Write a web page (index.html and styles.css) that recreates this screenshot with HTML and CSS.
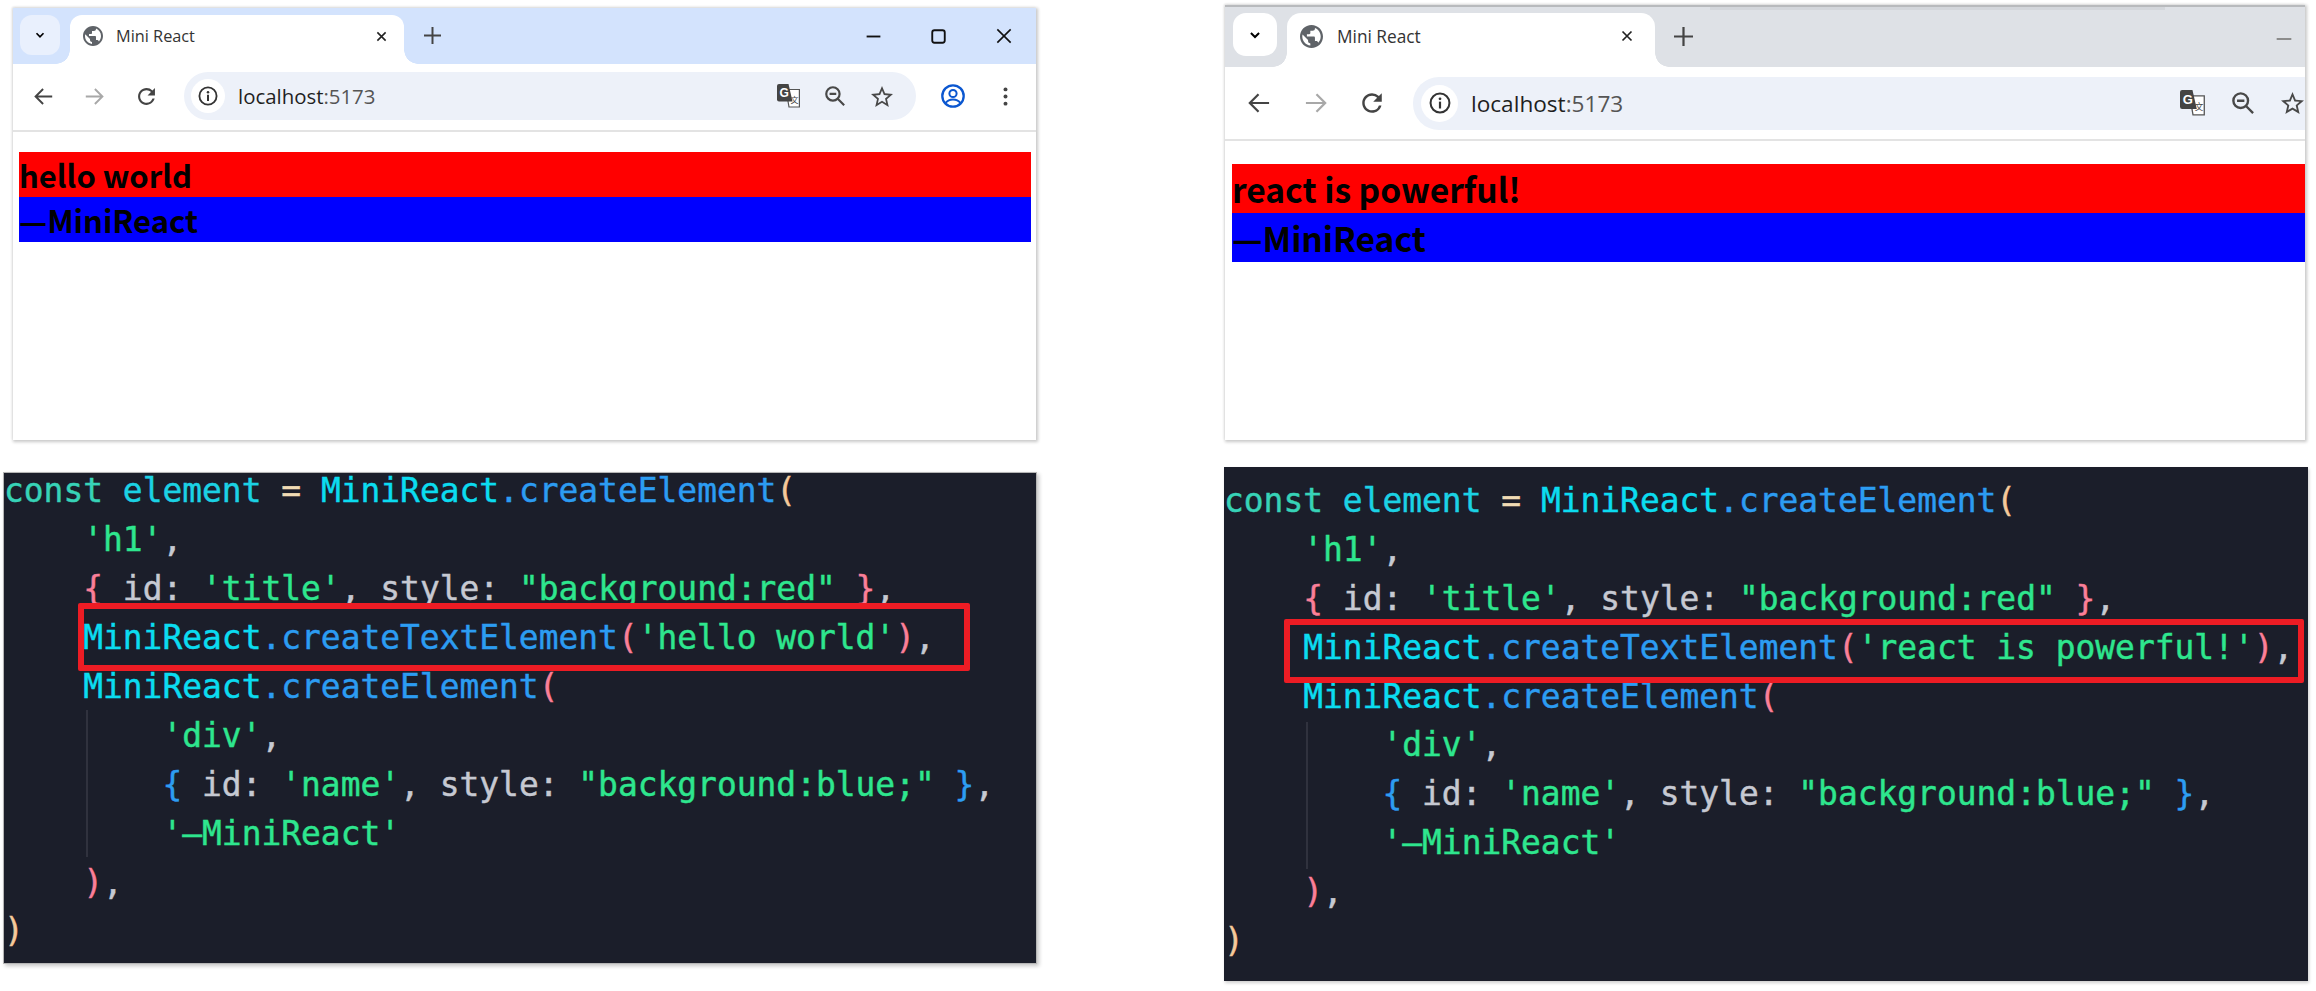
FILE: index.html
```html
<!DOCTYPE html>
<html lang="en">
<head>
<meta charset="utf-8">
<title>Mini React</title>
<link rel="stylesheet" href="styles.css">
</head>
<body>
<svg class="sprite" aria-hidden="true">
  <symbol id="i-chev" viewBox="0 0 24 24"><path d="M5 8.5l7 7 7-7" fill="none" stroke="currentColor" stroke-width="3.4"/></symbol>
  <symbol id="i-globe" viewBox="2 2 20 20"><path fill="#5f6368" d="M12 2C6.48 2 2 6.48 2 12s4.48 10 10 10 10-4.48 10-10S17.52 2 12 2zm-1 17.93c-3.95-.49-7-3.85-7-7.93 0-.62.08-1.21.21-1.79L9 15v1c0 1.1.9 2 2 2v1.93zm6.9-2.54c-.26-.81-1-1.39-1.9-1.39h-1v-3c0-.55-.45-1-1-1H8v-2h2c.55 0 1-.45 1-1V7h2c1.1 0 2-.9 2-2v-.41c2.93 1.19 5 4.06 5 7.41 0 2.08-.8 3.97-2.1 5.39z"/></symbol>
  <symbol id="i-x" viewBox="0 0 24 24"><path d="M3 3l18 18M21 3L3 21" fill="none" stroke="currentColor" stroke-width="3.4"/></symbol>
  <symbol id="i-plus" viewBox="0 0 24 24"><path d="M12 0v24M0 12h24" fill="none" stroke="currentColor" stroke-width="2.8"/></symbol>
  <symbol id="i-back" viewBox="0 0 24 24"><path d="M23 12H2M11.5 2.5L2 12l9.5 9.500" fill="none" stroke="currentColor" stroke-width="2.400"/></symbol>
  <symbol id="i-fwd" viewBox="0 0 24 24"><path d="M1 12h21M12.500 2.500L22 12l-9.500 9.500" fill="none" stroke="currentColor" stroke-width="2.400"/></symbol>
  <symbol id="i-reload" viewBox="3 3 18 18"><path fill="currentColor" d="M17.650 6.350A7.958 7.958 0 0 0 12 4c-4.420 0-7.990 3.580-7.990 8s3.570 8 7.990 8c3.730 0 6.840-2.550 7.730-6h-2.080A5.990 5.990 0 0 1 12 18c-3.310 0-6-2.690-6-6s2.690-6 6-6c1.660 0 3.140.690 4.220 1.780L13 11h7V4l-2.350 2.350z"/></symbol>
  <symbol id="i-info" viewBox="0 0 24 24"><circle cx="12" cy="12" r="10.300" fill="none" stroke="currentColor" stroke-width="2.200"/><circle cx="12" cy="7.400" r="1.500" fill="currentColor"/><path d="M12 10.500v7.500" stroke="currentColor" stroke-width="2.400"/></symbol>
  <symbol id="i-zoom" viewBox="0 0 24 24"><circle cx="9.500" cy="9.500" r="8" fill="none" stroke="currentColor" stroke-width="2.600"/><path d="M5.500 9.500h8M15.300 15.300L23 23" fill="none" stroke="currentColor" stroke-width="2.600"/></symbol>
  <symbol id="i-star" viewBox="2 2 20 19"><path fill="currentColor" d="M22 9.240l-7.190-.620L12 2 9.190 8.630 2 9.240l5.460 4.730L5.820 21 12 17.270 18.180 21l-1.630-7.030L22 9.240zM12 15.400l-3.760 2.270 1-4.280-3.320-2.880 4.380-.380L12 6.100l1.710 4.040 4.380.380-3.320 2.880 1 4.280L12 15.400z"/></symbol>
  <symbol id="i-user" viewBox="0 0 24 24"><circle cx="12" cy="12" r="10.700" fill="none" stroke="currentColor" stroke-width="2.300"/><circle cx="12" cy="9.500" r="3.600" fill="none" stroke="currentColor" stroke-width="2"/><path d="M4.500 19c2-2.600 4.500-3.600 7.500-3.600s5.500 1 7.500 3.600" fill="none" stroke="currentColor" stroke-width="2"/></symbol>
  <symbol id="i-menu" viewBox="0 0 6 24"><circle cx="3" cy="3" r="2.500" fill="currentColor"/><circle cx="3" cy="12" r="2.500" fill="currentColor"/><circle cx="3" cy="21" r="2.500" fill="currentColor"/></symbol>
  <symbol id="i-min" viewBox="0 0 24 24"><path d="M1 12h22" stroke="currentColor" stroke-width="3"/></symbol>
  <symbol id="i-max" viewBox="0 0 24 24"><rect x="2" y="2" width="20" height="20" rx="3.500" fill="none" stroke="currentColor" stroke-width="3"/></symbol>
  <symbol id="i-close" viewBox="0 0 24 24"><path d="M2 2l20 20M22 2L2 22" fill="none" stroke="currentColor" stroke-width="2.400"/></symbol>
</svg>

<main class="page">
  <section class="col col-a">
    <div class="browser browser-a">
      <div class="strip">
        <div class="tabsearch"><svg class="ic ic-chev"><use href="#i-chev"/></svg></div>
        <div class="tab">
          <svg class="ic ic-globe"><use href="#i-globe"/></svg>
          <span class="tab-title">Mini React</span>
          <svg class="ic ic-x"><use href="#i-x"/></svg>
        </div>
        <svg class="ic ic-plus"><use href="#i-plus"/></svg>
        <div class="winctl">
          <svg class="ic ic-min"><use href="#i-min"/></svg>
          <svg class="ic ic-max"><use href="#i-max"/></svg>
          <svg class="ic ic-close"><use href="#i-close"/></svg>
        </div>
      </div>
      <div class="toolbar">
        <svg class="ic ic-nav ic-back"><use href="#i-back"/></svg>
        <svg class="ic ic-nav ic-fwd"><use href="#i-fwd"/></svg>
        <svg class="ic ic-nav ic-reload"><use href="#i-reload"/></svg>
        <div class="omni">
          <span class="site"><svg class="ic ic-info"><use href="#i-info"/></svg></span>
          <span class="url">localhost<span class="port">:5173</span></span>
          <svg class="ic ic-tr" viewBox="0 0 24 24"><path fill="#fff" stroke="#555" stroke-width="1.200" d="M9 5.500h13.400v17.500H12z"/><path fill="#444" d="M2 0h9.500l4 17.500H2a2 2 0 0 1-2-2V2a2 2 0 0 1 2-2z"/><text x="2.500" y="12.500" class="tr-g">G</text><text x="13.500" y="18.500" class="tr-z">文</text></svg>
          <svg class="ic ic-zoom"><use href="#i-zoom"/></svg>
          <svg class="ic ic-star"><use href="#i-star"/></svg>
        </div>
        <svg class="ic ic-user"><use href="#i-user"/></svg>
        <svg class="ic ic-menu"><use href="#i-menu"/></svg>
      </div>
      <div class="viewport">
        <h1 class="h-red">hello world</h1>
        <div class="h-blue">—MiniReact</div>
      </div>
    </div>

    <div class="code code-a">
      <div class="lines">
        <div class="ln"><span class="k">const</span> <span class="v">element</span> <span class="o">=</span> <span class="c">MiniReact</span><span class="f">.createElement</span><span class="p1">(</span></div>
        <div class="ln">    <span class="s">'h1'</span><span class="d">,</span></div>
        <div class="ln">    <span class="p2">{</span> <span class="d">id:</span> <span class="s">'title'</span><span class="d">, style:</span> <span class="s">"background:red"</span> <span class="p2">}</span><span class="d">,</span></div>
        <div class="ln">    <span class="c">MiniReact</span><span class="f">.createTextElement</span><span class="p2">(</span><span class="s">'hello world'</span><span class="p2">)</span><span class="d">,</span></div>
        <div class="ln">    <span class="c">MiniReact</span><span class="f">.createElement</span><span class="p2">(</span></div>
        <div class="ln">        <span class="s">'div'</span><span class="d">,</span></div>
        <div class="ln">        <span class="p3">{</span> <span class="d">id:</span> <span class="s">'name'</span><span class="d">, style:</span> <span class="s">"background:blue;"</span> <span class="p3">}</span><span class="d">,</span></div>
        <div class="ln">        <span class="s">'—MiniReact'</span></div>
        <div class="ln">    <span class="p2">)</span><span class="d">,</span></div>
        <div class="ln"><span class="p1">)</span></div>
      </div>
      <div class="guide"></div>
      <div class="mark"></div>
    </div>
  </section>

  <section class="col col-b">
    <div class="browser browser-b">
      <div class="strip">
        <div class="tabsearch"><svg class="ic ic-chev"><use href="#i-chev"/></svg></div>
        <div class="tab">
          <svg class="ic ic-globe"><use href="#i-globe"/></svg>
          <span class="tab-title">Mini React</span>
          <svg class="ic ic-x"><use href="#i-x"/></svg>
        </div>
        <svg class="ic ic-plus"><use href="#i-plus"/></svg>
        <div class="winctl">
          <svg class="ic ic-min"><use href="#i-min"/></svg>
        </div>
      </div>
      <div class="toolbar">
        <svg class="ic ic-nav ic-back"><use href="#i-back"/></svg>
        <svg class="ic ic-nav ic-fwd"><use href="#i-fwd"/></svg>
        <svg class="ic ic-nav ic-reload"><use href="#i-reload"/></svg>
        <div class="omni">
          <span class="site"><svg class="ic ic-info"><use href="#i-info"/></svg></span>
          <span class="url">localhost<span class="port">:5173</span></span>
          <svg class="ic ic-tr" viewBox="0 0 24 24"><path fill="#fff" stroke="#555" stroke-width="1.200" d="M9 5.500h13.400v17.500H12z"/><path fill="#444" d="M2 0h9.500l4 17.500H2a2 2 0 0 1-2-2V2a2 2 0 0 1 2-2z"/><text x="2.500" y="12.500" class="tr-g">G</text><text x="13.500" y="18.500" class="tr-z">文</text></svg>
          <svg class="ic ic-zoom"><use href="#i-zoom"/></svg>
          <svg class="ic ic-star"><use href="#i-star"/></svg>
        </div>
      </div>
      <div class="viewport">
        <h1 class="h-red">react is powerful!</h1>
        <div class="h-blue">—MiniReact</div>
      </div>
    </div>

    <div class="code code-b">
      <div class="lines">
        <div class="ln"><span class="k">const</span> <span class="v">element</span> <span class="o">=</span> <span class="c">MiniReact</span><span class="f">.createElement</span><span class="p1">(</span></div>
        <div class="ln">    <span class="s">'h1'</span><span class="d">,</span></div>
        <div class="ln">    <span class="p2">{</span> <span class="d">id:</span> <span class="s">'title'</span><span class="d">, style:</span> <span class="s">"background:red"</span> <span class="p2">}</span><span class="d">,</span></div>
        <div class="ln">    <span class="c">MiniReact</span><span class="f">.createTextElement</span><span class="p2">(</span><span class="s">'react is powerful!'</span><span class="p2">)</span><span class="d">,</span></div>
        <div class="ln">    <span class="c">MiniReact</span><span class="f">.createElement</span><span class="p2">(</span></div>
        <div class="ln">        <span class="s">'div'</span><span class="d">,</span></div>
        <div class="ln">        <span class="p3">{</span> <span class="d">id:</span> <span class="s">'name'</span><span class="d">, style:</span> <span class="s">"background:blue;"</span> <span class="p3">}</span><span class="d">,</span></div>
        <div class="ln">        <span class="s">'—MiniReact'</span></div>
        <div class="ln">    <span class="p2">)</span><span class="d">,</span></div>
        <div class="ln"><span class="p1">)</span></div>
      </div>
      <div class="guide"></div>
      <div class="mark"></div>
    </div>
  </section>
</main>
</body>
</html>
```
FILE: styles.css
```css
* { box-sizing: border-box; }
html, body { margin: 0; padding: 0; background: #fff; }
body { width: 2316px; height: 991px; overflow: hidden; }
.sprite { position: absolute; width: 0; height: 0; }

.page { display: flex; height: 991px; }
.col { display: flex; flex-direction: column; }
.col-a { width: 1032px; margin-left: 4px; padding-top: 8px; }
.col-b { width: 1084px; margin-left: 188px; padding-top: 5px; }

.ic { display: block; flex: none; }
.tr-g { font: 700 12px "Liberation Sans", sans-serif; fill: #fff; }
.tr-z { font: 400 8px "Noto Sans CJK SC", sans-serif; fill: #444; }

/* Browser window */
.browser {
  display: flex; flex-direction: column; overflow: hidden; background: #fff;
  box-shadow: 1px 1px 3px 1px #c8c8c8, -1px -1px 2px #eee;
}
.browser-a {
  width: 1023px; height: 432px; margin-left: 9px;
  --strip: #d3e3fd; --search: #e9f0fd;
}
.browser-b {
  width: 1080px; height: 435px; margin-left: 1px; border-top: 2px solid #b8babd;
  --strip: #dee1e6; --search: #fff;
}

.strip { position: relative; display: flex; align-items: flex-start; flex: none; background: var(--strip); }
.browser-a .strip { height: 56px; padding: 7px 0 0 7px; }
.browser-b .strip { height: 60px; padding: 6px 0 0 8px; }
.browser-b .strip::before {
  content: ""; position: absolute; left: 485px; top: 0; width: 455px; height: 3px;
  background: #d3d6db;
}

.tabsearch { display: flex; align-items: center; justify-content: center; background: var(--search); flex: none; }
.browser-a .tabsearch { width: 40px; height: 40px; border-radius: 12px; }
.browser-b .tabsearch { width: 44px; height: 43px; border-radius: 13px; }
.browser-a .ic-chev { width: 12px; height: 12px; }
.browser-b .ic-chev { width: 14px; height: 14px; }

.tab {
  position: relative; display: flex; align-items: center; flex: none; background: #fff;
}
.browser-a .tab { width: 334px; height: 49px; margin-left: 10px; padding: 0 17px 7px 13px; border-radius: 12px 12px 0 0; }
.browser-b .tab { width: 368px; height: 54px; margin-left: 10px; padding: 0 22px 8px 13px; border-radius: 14px 14px 0 0; }
.tab::before, .tab::after {
  content: ""; position: absolute; bottom: 0; width: 14px; height: 14px;
}
.tab::before { left: -14px; background: radial-gradient(circle at 0 0, transparent 13.500px, #fff 14px); }
.tab::after { right: -14px; background: radial-gradient(circle at 100% 0, transparent 13.500px, #fff 14px); }

.browser-a .ic-globe { width: 20px; height: 20px; }
.browser-b .ic-globe { width: 23px; height: 23px; }
.tab-title { color: #333; font-family: "Open Sans", "Noto Sans", sans-serif; white-space: nowrap; }
.browser-a .tab-title { margin-left: 13px; font-size: 16.300px; }
.browser-b .tab-title { margin-left: 14px; font-size: 17.300px; }
.ic-x { margin-left: auto; color: #222; }
.browser-a .ic-x { width: 11px; height: 11px; }
.browser-b .ic-x { width: 12px; height: 12px; }
.ic-plus { color: #444; }
.browser-a .ic-plus { width: 17px; height: 17px; margin: 12px 0 0 20px; }
.browser-b .ic-plus { width: 19px; height: 19px; margin: 14px 0 0 19px; }

.winctl { display: flex; align-items: center; margin-left: auto; }
.browser-a .winctl { padding: 13px 24px 0 0; gap: 50px; color: #111; }
.browser-b .winctl { padding: 18px 13px 0 0; color: #8c8c8c; }
.browser-a .ic-min { width: 15px; height: 15px; }
.browser-b .ic-min { width: 16px; height: 16px; }
.browser-a .ic-max { width: 15px; height: 15px; }
.browser-a .ic-close { width: 16px; height: 16px; }

/* Toolbar */
.toolbar { display: flex; align-items: center; flex: none; background: #fff; position: relative; border-bottom: 2px solid #e3e3e3; }
.browser-a .toolbar { height: 68px; padding: 0 0 2px 21px; border-radius: 14px 14px 0 0; }
.browser-b .toolbar { height: 74px; padding: 0 0 0 23px; border-radius: 16px 16px 0 0; }
.ic-nav { color: #444; }
.ic-fwd { color: #a8a8a8; }
.browser-a .ic-nav { width: 19px; height: 19px; }
.browser-b .ic-nav { width: 22px; height: 22px; }
.browser-a .ic-fwd { margin-left: 32px; }
.browser-a .ic-reload { margin-left: 33px; }
.browser-b .ic-fwd { margin-left: 35px; }
.browser-b .ic-reload { margin-left: 34px; }

.omni { display: flex; align-items: center; background: #edf1f9; flex: none; }
.browser-a .omni { width: 732px; height: 48px; margin-left: 28px; padding-left: 7px; border-radius: 24px; }
.browser-b .omni { width: 900px; height: 53px; margin-left: 30px; padding-left: 8px; border-radius: 26px 0 0 26px; }
.site { display: flex; align-items: center; justify-content: center; background: #fff; border-radius: 50%; flex: none; color: #333; }
.browser-a .site { width: 34px; height: 34px; }
.browser-b .site { width: 37px; height: 37px; }
.browser-a .ic-info { width: 20px; height: 20px; }
.browser-b .ic-info { width: 22px; height: 22px; }
.url { color: #1f1f1f; font-family: "Open Sans", "Noto Sans", sans-serif; white-space: nowrap; }
.port { color: #555; }
.browser-a .url { margin-left: 13px; font-size: 20.400px; width: 539px; }
.browser-b .url { margin-left: 13px; font-size: 22.600px; width: 709px; }

.browser-a .ic-tr { width: 24px; height: 24px; }
.browser-b .ic-tr { width: 26px; height: 26px; }
.ic-zoom { color: #484848; }
.browser-a .ic-zoom { width: 20px; height: 20px; margin-left: 24px; }
.browser-b .ic-zoom { width: 22px; height: 22px; margin-left: 26px; }
.ic-star { color: #484848; }
.browser-a .ic-star { width: 22px; height: 21px; margin-left: 26px; }
.browser-b .ic-star { width: 23px; height: 22px; margin-left: 27px; }

.ic-user { color: #0b57d0; width: 24px; height: 24px; margin-left: 25px; }
.ic-menu { color: #444; width: 5px; height: 19px; margin-left: 38px; }

/* Page in the window */
.viewport { flex: 1; font-family: "Noto Sans CJK SC", "Noto Sans", sans-serif; font-weight: 700; color: #000; }
.browser-a .viewport { padding: 20px 5px 0 6px; font-size: 31px; line-height: 45px; }
.browser-b .viewport { padding: 23px 0 0 7px; font-size: 33.600px; line-height: 49px; }
.h-red, .h-blue { margin: 0; font: inherit; line-height: inherit; white-space: nowrap; }
.h-red { background: #f00; }
.h-blue { background: #00f; }

/* Code panels */
.code { position: relative; background: #1b1e2a; font-family: "DejaVu Sans Mono", monospace; font-size: 32.900px; -webkit-text-stroke: 0.45px; }
.code-a { width: 1032px; height: 490px; margin-top: 33px; box-shadow: 0 0 0 1px #b5b5b5, 2px 2px 4px 1px #c4c4c4; }
.code-b { width: 1084px; height: 514px; margin-top: 27px; box-shadow: 1px 2px 3px #d0d0d0; }
.lines { display: flow-root; }
.code-b .lines { padding-top: 10px; }
.ln { height: 48.900px; line-height: 48.900px; white-space: pre; }
.code-a .ln:first-child { height: 43.300px; line-height: 36px; }
.k { color: #37d3b7; }
.v { color: #1bd2e4; }
.o { color: #f1dcb4; }
.c { color: #0bdcf0; }
.f { color: #2c9cf2; }
.s { color: #2ee68e; }
.d { color: #c6c9d2; }
.p1 { color: #f6c99a; }
.p2 { color: #fb7f98; }
.p3 { color: #2d9df2; }

.guide { position: absolute; left: 82px; width: 2px; height: 147px; background: #30323e; }
.code-a .guide { top: 237px; }
.code-b .guide { top: 255px; }
.mark { position: absolute; border: 6px solid #ed1c24; border-radius: 2px; }
.code-a .mark { left: 74px; top: 130px; width: 892px; height: 68px; }
.code-b .mark { left: 60px; top: 152px; width: 1020px; height: 64px; }
```
